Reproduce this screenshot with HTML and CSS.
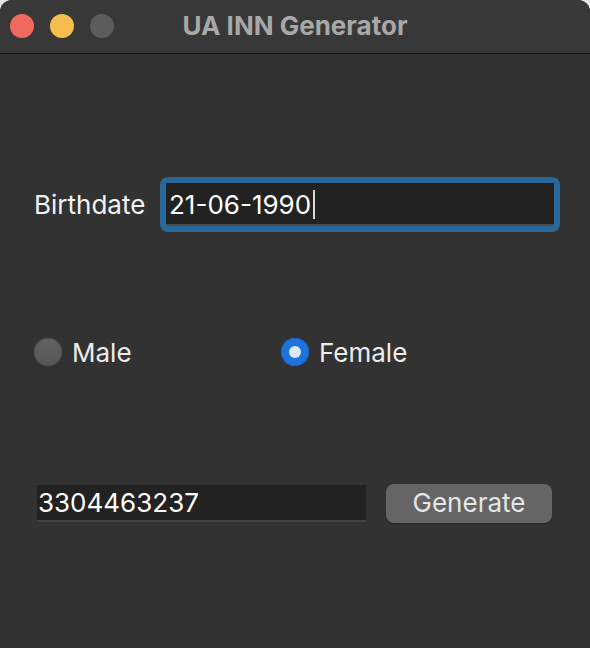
FILE: index.html
```html
<!DOCTYPE html>
<html>
<head>
<meta charset="utf-8">
<title>UA INN Generator</title>
<link rel="stylesheet" href="styles.css">
</head>
<body>
<div class="window">
  <div class="titlebar">
    <div class="lights">
      <span class="light red"></span>
      <span class="light yellow"></span>
      <span class="light gray"></span>
    </div>
    <div class="title">UA INN Generator</div>
  </div>
  <div class="content">
    <div class="row birth-row">
      <label class="label">Birthdate</label>
      <div class="focus-ring">
        <div class="field field-focused"><span class="value">21-06-1990</span><span class="caret"></span></div>
      </div>
    </div>
    <div class="row radio-row">
      <div class="radio-item male">
        <span class="radio"></span><span class="radio-label">Male</span>
      </div>
      <div class="radio-item female">
        <span class="radio checked"><span class="dot"></span></span><span class="radio-label">Female</span>
      </div>
    </div>
    <div class="row result-row">
      <div class="field result"><span class="value">3304463237</span></div>
      <button class="button">Generate</button>
    </div>
  </div>
</div>
</body>
</html>
```
FILE: styles.css
```css
html, body {
  margin: 0;
  padding: 0;
  background: #e4e4e4;
}
body {
  font-family: Inter, "Liberation Sans", Arial, sans-serif;
}
.window {
  width: 590px;
  height: 648px;
  background: #323232;
  border-radius: 12px 12px 0 0;
  overflow: hidden;
  display: flex;
  flex-direction: column;
}
.titlebar {
  height: 53px;
  flex: 0 0 53px;
  background: #383838;
  border-bottom: 1px solid #161616;
  position: relative;
  display: flex;
  align-items: center;
}
.lights {
  display: flex;
  gap: 16px;
  padding-left: 10px;
  margin-top: -2px;
}
.light {
  width: 24px;
  height: 24px;
  border-radius: 50%;
  display: block;
}
.red { background: #ee6a5f; }
.yellow { background: #f5be4f; }
.gray { background: #5c5c5c; }
.title {
  position: absolute;
  left: 0;
  right: 0;
  top: 0;
  bottom: 0;
  display: flex;
  align-items: center;
  justify-content: center;
  color: #a8a8a8;
  font-weight: 700;
  font-size: 26px;
  margin-top: -3px;
  pointer-events: none;
}
.content {
  display: flex;
  flex-direction: column;
  padding-top: 123px;
}
.row {
  display: flex;
  align-items: center;
}
.birth-row {
  padding-left: 34px;
  height: 55px;
}
.label {
  color: #f2f2f2;
  font-size: 26px;
  width: 126px;
}
.focus-ring {
  width: 400px;
  height: 55px;
  box-sizing: border-box;
  border-radius: 8px;
  background: #28699a;
  padding: 6px;
}
.field {
  background: #222222;
  box-sizing: border-box;
  display: flex;
  align-items: center;
  color: #ffffff;
  font-size: 26px;
}
.field-focused {
  width: 100%;
  height: 100%;
  border-top: 1px solid #1a1a1a;
  border-bottom: 2px solid #4a4a4a;
  padding-left: 3px;
}
.caret {
  display: block;
  width: 2px;
  height: 29px;
  background: #d8d8d8;
  margin-left: 2px;
}
.radio-row {
  margin-top: 106px;
  height: 28px;
  padding-left: 34px;
}
.radio-item {
  display: flex;
  align-items: center;
  gap: 10px;
}
.male {
  width: 247px;
}
.radio {
  width: 28px;
  height: 28px;
  border-radius: 50%;
  background: linear-gradient(#616161, #575757);
  box-shadow: inset 0 0 0 1px #505050;
  display: flex;
  align-items: center;
  justify-content: center;
}
.radio.checked {
  background: #1c74dc;
  box-shadow: inset 0 0 0 1px #1766c4;
}
.dot {
  width: 12px;
  height: 12px;
  border-radius: 50%;
  background: #dfe9f8;
}
.radio-label {
  color: #ececec;
  font-size: 26px;
}
.result-row {
  margin-top: 118px;
  height: 39px;
  padding-left: 37px;
}
.result {
  width: 329px;
  height: 37px;
  border-bottom: 2px solid #444444;
  padding-left: 1px;
}
.button {
  margin-left: 20px;
  width: 166px;
  height: 39px;
  border: none;
  border-radius: 8px;
  background: #656565;
  color: #e6e6e6;
  font-family: Inter, "Liberation Sans", Arial, sans-serif;
  font-size: 26px;
  padding: 0 0 3px 0;
  box-shadow: 0 1px 1px rgba(0,0,0,0.25);
}
```
